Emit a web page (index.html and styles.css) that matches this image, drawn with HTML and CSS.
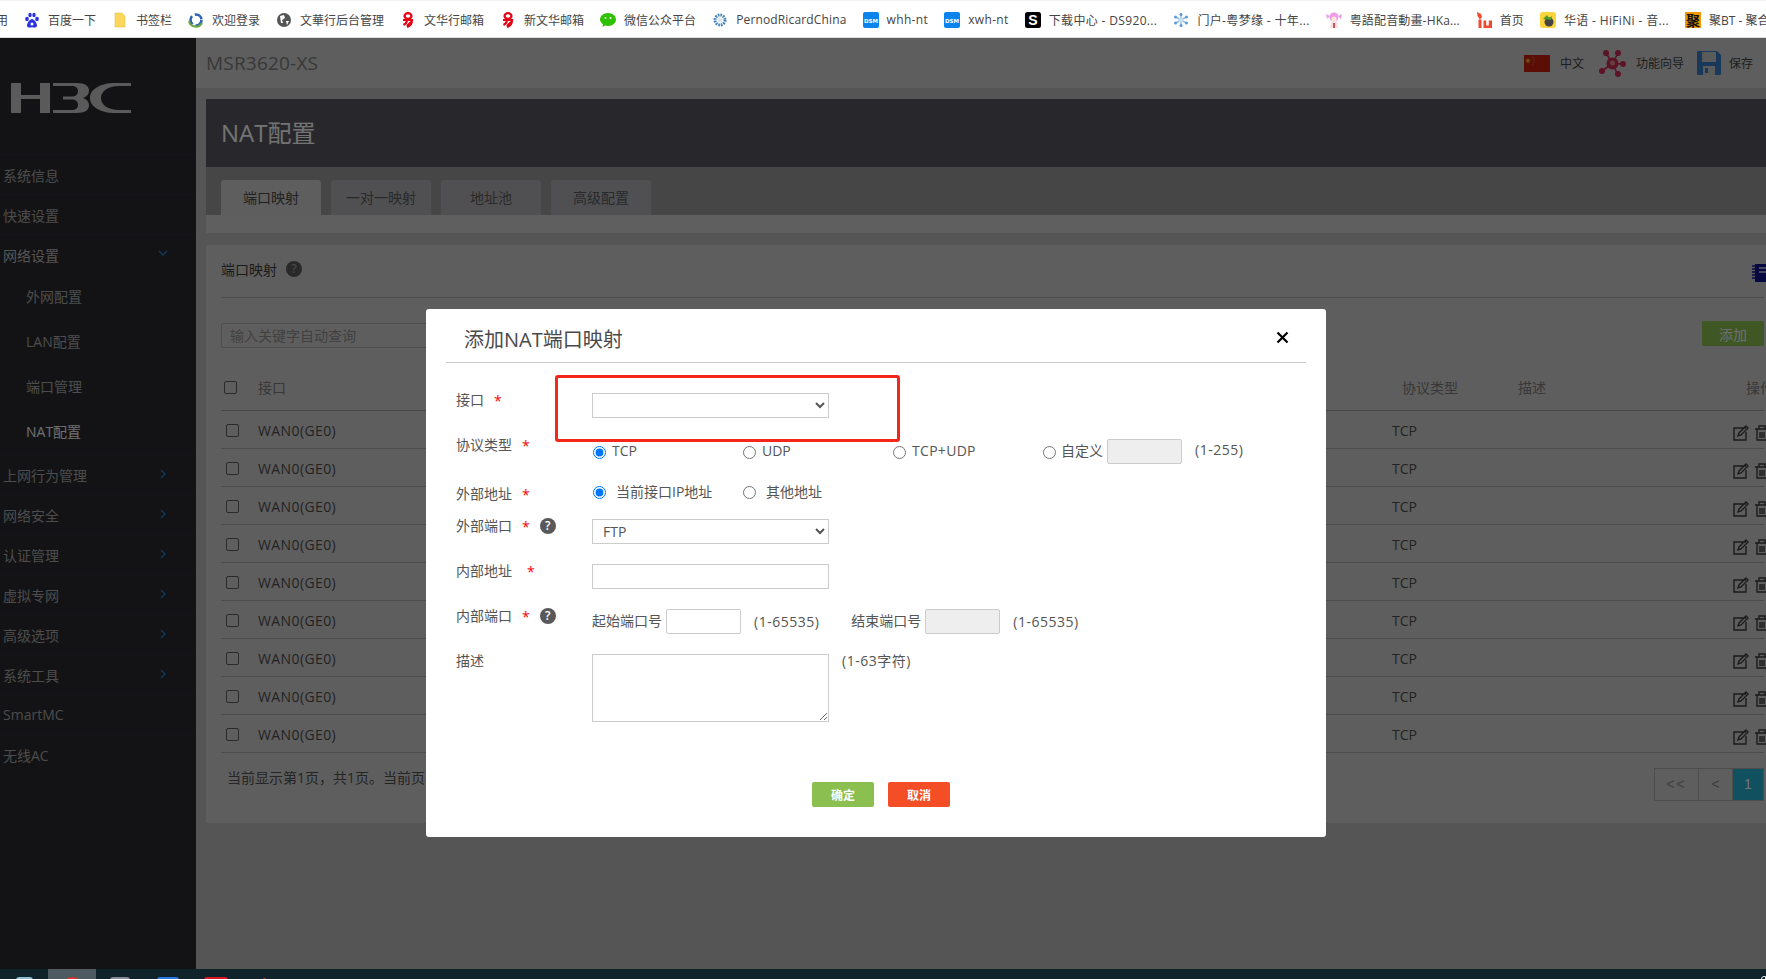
FILE: index.html
```html
<!DOCTYPE html>
<html lang="zh-CN">
<head>
<meta charset="utf-8">
<title>NAT配置</title>
<link rel="stylesheet" href="styles.css">
</head>
<body>
<nav class="bookmarks">
  <a class="bm bm-first"><span>应用</span></a>
  <a class="bm"><svg class="ico" viewBox="0 0 16 16"><g fill="#2932e1"><ellipse cx="3" cy="7" rx="1.8" ry="2.3"/><ellipse cx="6" cy="3" rx="1.7" ry="2.3"/><ellipse cx="10" cy="3" rx="1.7" ry="2.3"/><ellipse cx="13" cy="7" rx="1.8" ry="2.3"/><path d="M8 7c-2 0-5 4-5 6.500 0 2 2 2.500 5 1.800 3 .7 5 .2 5-1.800C13 11 10 7 8 7z"/></g><circle cx="8" cy="12" r="1.500" fill="#fff"/></svg><span>百度一下</span></a>
  <a class="bm"><svg class="ico" viewBox="0 0 16 16"><path d="M3 1h7l3 3v11H3z" fill="#fbd75b" stroke="#e8c24a" stroke-width=".6"/></svg><span>书签栏</span></a>
  <a class="bm"><svg class="ico" viewBox="0 0 16 16"><circle cx="8" cy="8" r="5.500" fill="none" stroke="#2c62b8" stroke-width="2.600" stroke-dasharray="9 3"/><path d="M1 9a7 7 0 0 0 13 2" fill="none" stroke="#6aa83c" stroke-width="2"/></svg><span>欢迎登录</span></a>
  <a class="bm"><svg class="ico" viewBox="0 0 16 16"><circle cx="8" cy="8" r="7" fill="#555"/><path d="M4 4l4-1 1 3-3 2 1 3-2 0zM10 9l3 0-2 4z" fill="#fff"/></svg><span>文華行后台管理</span></a>
  <a class="bm"><svg class="ico" viewBox="0 0 16 16"><g fill="none" stroke="#e60012" stroke-width="2.200"><ellipse cx="8" cy="4" rx="3.500" ry="2.800"/><path d="M3 8h10M12 8c0 4-2 6-5 7M7 9c-.5 2-1.500 3-3.500 4M11 10l-4 4"/></g></svg><span>文华行邮箱</span></a>
  <a class="bm"><svg class="ico" viewBox="0 0 16 16"><g fill="none" stroke="#e60012" stroke-width="2.200"><ellipse cx="8" cy="4" rx="3.500" ry="2.800"/><path d="M3 8h10M12 8c0 4-2 6-5 7M7 9c-.5 2-1.500 3-3.500 4M11 10l-4 4"/></g></svg><span>新文华邮箱</span></a>
  <a class="bm"><svg class="ico" viewBox="0 0 16 16"><path d="M8 1c4.400 0 8 2.900 8 6.500S12.400 14 8 14c-1 0-1.900-.1-2.800-.4L2.500 15l.5-2.800C1.200 11 0 9.400 0 7.500 0 3.900 3.600 1 8 1z" fill="#2dc100"/><circle cx="5.500" cy="6" r="1" fill="#fff"/><circle cx="10.500" cy="6" r="1" fill="#fff"/></svg><span>微信公众平台</span></a>
  <a class="bm"><svg class="ico" viewBox="0 0 16 16"><circle cx="8" cy="8" r="5" fill="none" stroke="#3f7fb5" stroke-width="3" stroke-dasharray="1.600 1"/><circle cx="8" cy="8" r="2.500" fill="#dbe8f2"/></svg><span class="ls-s">PernodRicardChina</span></a>
  <a class="bm"><svg class="ico" viewBox="0 0 16 16"><rect width="16" height="16" rx="2" fill="#0a84ee"/><text x="8" y="10.500" class="ico-dsm">DSM</text></svg><span class="ls-l">whh-nt</span></a>
  <a class="bm"><svg class="ico" viewBox="0 0 16 16"><rect width="16" height="16" rx="2" fill="#0a84ee"/><text x="8" y="10.500" class="ico-dsm">DSM</text></svg><span class="ls-l">xwh-nt</span></a>
  <a class="bm"><svg class="ico" viewBox="0 0 16 16"><rect width="16" height="16" rx="2.500" fill="#000"/><text x="8" y="13" class="ico-s">S</text></svg><span class="ls-l">下载中心 - DS920...</span></a>
  <a class="bm"><svg class="ico" viewBox="0 0 16 16"><g stroke="#8fbde6" stroke-width="1.600"><path d="M8 1v14M2 4.500l12 7M14 4.500l-12 7"/></g><g fill="#5b9bd5"><circle cx="8" cy="2.500" r="1.500"/><circle cx="8" cy="13.500" r="1.500"/><circle cx="2.500" cy="5" r="1.500"/><circle cx="13.500" cy="5" r="1.500"/><circle cx="2.500" cy="11" r="1.500"/><circle cx="13.500" cy="11" r="1.500"/></g><circle cx="8" cy="8" r="2.500" fill="#c7def0"/></svg><span class="ls-l">门户-粤梦缘 - 十年...</span></a>
  <a class="bm"><svg class="ico" viewBox="0 0 16 16"><circle cx="8" cy="5" r="4.500" fill="#ee9be8"/><path d="M0 2l4 2-3 3zM16 2l-4 2 3 3z" fill="#ee9be8"/><circle cx="8" cy="7" r="2.500" fill="#fde8dc"/><path d="M5 10h6l1 6H4z" fill="#f5dfe8"/><path d="M7 11h2v5H7z" fill="#d9534f"/></svg><span class="ls-s">粤語配音動畫-HKa...</span></a>
  <a class="bm"><svg class="ico" viewBox="0 0 16 16"><path d="M1 0l4 2 1 3-2 2.500L1.500 4z" fill="#ef4a2f"/><path d="M2.500 7.500h3V16h-3zM7.500 8.500h2.700v5h2.600v-5H16V16H7.500z" fill="#ef4a2f"/></svg><span>首页</span></a>
  <a class="bm"><svg class="ico" viewBox="0 0 16 16"><rect width="16" height="16" rx="3" fill="#fbd43b"/><circle cx="9" cy="10" r="4.500" fill="#444"/><path d="M3 7l4-4 2 3 3-2-1 4z" fill="#4a9a2c"/></svg><span class="ls-l">华语 - HiFiNi - 音...</span></a>
  <a class="bm"><svg class="ico" viewBox="0 0 16 16"><rect width="16" height="16" fill="#f39800"/><text x="8" y="13.500" class="ico-ju">聚</text></svg><span>聚BT - 聚合</span></a>
</nav>

<div class="app">
  <aside class="sidebar">
    <div class="logo">
      <svg class="logo-mark" viewBox="0 0 120 30" aria-label="H3C">
        <g fill="#c8c8c8">
          <path d="M0 0h10v12h19V0h10v30H29V16H10v14H0z"/>
          <path d="M42 0H66C74 0 78 3 78 7.500 78 11 76 13.500 72 15 76 16.500 78 19 78 22.500 78 27 74 30 66 30H42V27H60C65 27 67 25 67 22 67 18.500 65 16.500 60 16.500H52V13.500H60C65 13.500 67 11.500 67 8 67 5 65 3 60 3H42z"/>
          <path d="M120 0H104C90 0 79 6 79 15 79 24 90 30 104 30H120V27H108C97 27 90 22 90 15 90 8 97 3 108 3H120z"/>
        </g>
      </svg>
    </div>
    <ul class="menu">
      <li class="menu-item"><span>系统信息</span></li>
      <li class="menu-item"><span>快速设置</span></li>
      <li class="menu-item menu-open"><span>网络设置</span><svg class="chev" viewBox="0 0 12 12"><path d="M2 4l4 4 4-4"/></svg></li>
      <li class="sub-list">
        <div class="sub-item">外网配置</div>
        <div class="sub-item">LAN配置</div>
        <div class="sub-item">端口管理</div>
        <div class="sub-item sub-active">NAT配置</div>
      </li>
      <li class="menu-item"><span>上网行为管理</span><svg class="chev" viewBox="0 0 12 12"><path d="M4 2l4 4-4 4"/></svg></li>
      <li class="menu-item"><span>网络安全</span><svg class="chev" viewBox="0 0 12 12"><path d="M4 2l4 4-4 4"/></svg></li>
      <li class="menu-item"><span>认证管理</span><svg class="chev" viewBox="0 0 12 12"><path d="M4 2l4 4-4 4"/></svg></li>
      <li class="menu-item"><span>虚拟专网</span><svg class="chev" viewBox="0 0 12 12"><path d="M4 2l4 4-4 4"/></svg></li>
      <li class="menu-item"><span>高级选项</span><svg class="chev" viewBox="0 0 12 12"><path d="M4 2l4 4-4 4"/></svg></li>
      <li class="menu-item"><span>系统工具</span><svg class="chev" viewBox="0 0 12 12"><path d="M4 2l4 4-4 4"/></svg></li>
      <li class="menu-item"><span>SmartMC</span></li>
      <li class="menu-item"><span>无线AC</span></li>
    </ul>
  </aside>

  <main class="main">
    <header class="topbar">
      <div class="device">MSR3620-XS</div>
      <div class="top-tools">
        <svg class="flag" viewBox="0 0 26 17"><rect width="26" height="17" fill="#c8200f"/><path d="M4 2.500l.8 2.200 2.300 0-1.900 1.400.7 2.200L4 6.900 2.100 8.300l.7-2.200L.9 4.700l2.300 0z" fill="#e8c030"/><circle cx="9" cy="2.500" r=".5" fill="#e8c030"/><circle cx="10" cy="4.500" r=".5" fill="#e8c030"/><circle cx="10" cy="7" r=".5" fill="#e8c030"/><circle cx="9" cy="9" r=".5" fill="#e8c030"/></svg>
        <span class="tool-text tool-lang">中文</span>
        <svg class="hub" viewBox="0 0 27 27"><g stroke="#c92b52" stroke-width="1.600"><path d="M13.500 13.500L7 3M13.500 13.500L19 3M13.500 13.500L25 14M13.500 13.500L3 21M13.500 13.500L19 25"/></g><g fill="#c92b52"><circle cx="7" cy="3" r="3"/><circle cx="19" cy="3" r="3"/><circle cx="24" cy="14" r="3"/><circle cx="3" cy="21" r="3"/><circle cx="19" cy="24" r="3"/><circle cx="13.500" cy="13.500" r="6"/></g><circle cx="13.500" cy="13" r="2.500" fill="#e88a8a"/></svg>
        <span class="tool-text tool-guide">功能向导</span>
        <svg class="floppy" viewBox="0 0 24 24"><path d="M1 0h19l4 4v19a1 1 0 0 1-1 1H1a1 1 0 0 1-1-1V1a1 1 0 0 1 1-1z" fill="#3a7fc8"/><rect x="5" y="1" width="14" height="10" fill="#c9c9c9"/><rect x="6" y="15" width="12" height="9" fill="#c9c9c9"/><rect x="8" y="17" width="3" height="5" fill="#3a7fc8"/></svg>
        <span class="tool-text">保存</span>
      </div>
    </header>

    <div class="wrap">
      <div class="page-title">NAT配置</div>
      <div class="tabs">
        <div class="tab tab-active">端口映射</div>
        <div class="tab">一对一映射</div>
        <div class="tab">地址池</div>
        <div class="tab">高级配置</div>
      </div>
      <div class="tab-strip"></div>

      <section class="card">
        <div class="card-head">
          <span class="card-title">端口映射</span>
          <span class="help help-dark">?</span>
          <svg class="book" viewBox="0 0 20 18"><path d="M3 0h17v18H3z" fill="#161690"/><path d="M0 2h4M0 5h4M0 8h4M0 11h4M0 14h4" stroke="#161690" stroke-width="1.500"/><path d="M7 4h10M7 8h10" stroke="#cfd0e8" stroke-width="1.500"/></svg>
        </div>
        <div class="toolbar">
          <input class="search" type="text" placeholder="输入关键字自动查询">
          <button class="btn-add" type="button">添加</button>
        </div>
        <table class="grid">
          <colgroup><col class="c1"><col class="c2"><col class="c3"><col class="c4"><col class="c5"></colgroup>
          <thead>
            <tr><th class="th-check"><input type="checkbox"></th><th>接口</th><th class="th-proto">协议类型</th><th>描述</th><th class="th-op">操作</th></tr>
          </thead>
          <tbody>
            <tr><td class="td-check"><input type="checkbox"></td><td class="td-if">WAN0(GE0)</td><td>TCP</td><td></td><td class="td-op"><svg class="op" viewBox="0 0 36 16"><path d="M13 3H1v12h12V7M5 11l1-3 7-7 2 2-7 7z"/><path d="M22 4h14M26 4V1h6v3M24 4v11h10V4M27 7v6M29 7v6M31 7v6"/></svg></td></tr>
            <tr><td class="td-check"><input type="checkbox"></td><td class="td-if">WAN0(GE0)</td><td>TCP</td><td></td><td class="td-op"><svg class="op" viewBox="0 0 36 16"><path d="M13 3H1v12h12V7M5 11l1-3 7-7 2 2-7 7z"/><path d="M22 4h14M26 4V1h6v3M24 4v11h10V4M27 7v6M29 7v6M31 7v6"/></svg></td></tr>
            <tr><td class="td-check"><input type="checkbox"></td><td class="td-if">WAN0(GE0)</td><td>TCP</td><td></td><td class="td-op"><svg class="op" viewBox="0 0 36 16"><path d="M13 3H1v12h12V7M5 11l1-3 7-7 2 2-7 7z"/><path d="M22 4h14M26 4V1h6v3M24 4v11h10V4M27 7v6M29 7v6M31 7v6"/></svg></td></tr>
            <tr><td class="td-check"><input type="checkbox"></td><td class="td-if">WAN0(GE0)</td><td>TCP</td><td></td><td class="td-op"><svg class="op" viewBox="0 0 36 16"><path d="M13 3H1v12h12V7M5 11l1-3 7-7 2 2-7 7z"/><path d="M22 4h14M26 4V1h6v3M24 4v11h10V4M27 7v6M29 7v6M31 7v6"/></svg></td></tr>
            <tr><td class="td-check"><input type="checkbox"></td><td class="td-if">WAN0(GE0)</td><td>TCP</td><td></td><td class="td-op"><svg class="op" viewBox="0 0 36 16"><path d="M13 3H1v12h12V7M5 11l1-3 7-7 2 2-7 7z"/><path d="M22 4h14M26 4V1h6v3M24 4v11h10V4M27 7v6M29 7v6M31 7v6"/></svg></td></tr>
            <tr><td class="td-check"><input type="checkbox"></td><td class="td-if">WAN0(GE0)</td><td>TCP</td><td></td><td class="td-op"><svg class="op" viewBox="0 0 36 16"><path d="M13 3H1v12h12V7M5 11l1-3 7-7 2 2-7 7z"/><path d="M22 4h14M26 4V1h6v3M24 4v11h10V4M27 7v6M29 7v6M31 7v6"/></svg></td></tr>
            <tr><td class="td-check"><input type="checkbox"></td><td class="td-if">WAN0(GE0)</td><td>TCP</td><td></td><td class="td-op"><svg class="op" viewBox="0 0 36 16"><path d="M13 3H1v12h12V7M5 11l1-3 7-7 2 2-7 7z"/><path d="M22 4h14M26 4V1h6v3M24 4v11h10V4M27 7v6M29 7v6M31 7v6"/></svg></td></tr>
            <tr><td class="td-check"><input type="checkbox"></td><td class="td-if">WAN0(GE0)</td><td>TCP</td><td></td><td class="td-op"><svg class="op" viewBox="0 0 36 16"><path d="M13 3H1v12h12V7M5 11l1-3 7-7 2 2-7 7z"/><path d="M22 4h14M26 4V1h6v3M24 4v11h10V4M27 7v6M29 7v6M31 7v6"/></svg></td></tr>
            <tr><td class="td-check"><input type="checkbox"></td><td class="td-if">WAN0(GE0)</td><td>TCP</td><td></td><td class="td-op"><svg class="op" viewBox="0 0 36 16"><path d="M13 3H1v12h12V7M5 11l1-3 7-7 2 2-7 7z"/><path d="M22 4h14M26 4V1h6v3M24 4v11h10V4M27 7v6M29 7v6M31 7v6"/></svg></td></tr>
          </tbody>
        </table>
        <div class="card-foot">
          <div class="foot-text">当前显示第1页，共1页。当前页共9条</div>
          <div class="pager"><span class="pg pg-first">&lt;&lt;</span><span class="pg pg-prev">&lt;</span><span class="pg pg-cur">1</span></div>
        </div>
      </section>
    </div>
  </main>

  <div class="overlay"></div>

  <div class="modal">
    <div class="modal-head">
      <h2 class="modal-title">添加NAT端口映射</h2>
      <svg class="close" viewBox="0 0 13 13"><path d="M1.500 1.500l10 10M11.500 1.500l-10 10"/></svg>
    </div>
    <form class="form">
      <div class="row row-a">
        <div class="lab"><span>接口</span><i class="star">*</i></div>
        <select class="ctl"><option></option></select>
      </div>
      <div class="row row-b">
        <div class="lab lab-up"><span>协议类型</span><i class="star">*</i></div>
        <div class="radios">
          <label class="radio"><input type="radio" name="p" checked>TCP</label>
          <label class="radio"><input type="radio" name="p">UDP</label>
          <label class="radio radio-both"><input type="radio" name="p">TCP+UDP</label>
          <label class="radio radio-last"><input type="radio" name="p">自定义<input class="short" type="text" disabled><span class="hint">(1-255)</span></label>
        </div>
      </div>
      <div class="row row-c">
        <div class="lab lab-down"><span>外部地址</span><i class="star">*</i></div>
        <div class="radios radios-wide">
          <label class="radio"><input type="radio" name="a" checked>当前接口IP地址</label>
          <label class="radio"><input type="radio" name="a">其他地址</label>
        </div>
      </div>
      <div class="row">
        <div class="lab"><span>外部端口</span><i class="star">*</i><span class="help">?</span></div>
        <select class="ctl"><option>FTP</option></select>
      </div>
      <div class="row">
        <div class="lab"><span>内部地址</span><i class="star star-far">*</i></div>
        <input class="ctl" type="text">
      </div>
      <div class="row">
        <div class="lab"><span>内部端口</span><i class="star">*</i><span class="help">?</span></div>
        <div class="ports">
          <span class="port-lab">起始端口号</span><input class="short" type="text"><span class="hint">(1-65535)</span>
          <span class="port-lab port-end">结束端口号</span><input class="short" type="text" disabled><span class="hint">(1-65535)</span>
        </div>
      </div>
      <div class="row">
        <div class="lab"><span>描述</span></div>
        <textarea class="area"></textarea>
        <span class="hint hint-area">(1-63字符)</span>
      </div>
      <div class="actions">
        <button class="btn btn-ok" type="button">确定</button>
        <button class="btn btn-cancel" type="button">取消</button>
      </div>
    </form>
    <div class="callout"></div>
  </div>
</div>

<footer class="taskbar">
  <span class="tb-app"><i class="tb-i tb-win"></i></span>
  <span class="tb-app tb-active"><i class="tb-i tb-red"></i></span>
  <span class="tb-app"><i class="tb-i tb-gray"></i></span>
  <span class="tb-app"><i class="tb-i tb-blue"></i></span>
  <span class="tb-app"><i class="tb-i tb-crimson"></i></span>
  <span class="tb-app"><i class="tb-i tb-dot"></i></span>
  <i class="tb-tray"></i>
</footer>
</body>
</html>
```

FILE: styles.css
```css
* { box-sizing: border-box; }
html, body { margin: 0; height: 100%; }
body {
  width: 1766px;
  height: 979px;
  overflow: hidden;
  display: flex;
  flex-direction: column;
  font-family: "Open Sans", "Noto Sans CJK SC", sans-serif;
  font-size: 14px;
  color: #525252;
  background: #bdbdbd;
}

/* bookmarks bar */
.bookmarks {
  flex: none;
  height: 38px;
  display: flex;
  align-items: center;
  gap: 16px;
  padding-top: 1px;
  background: #fff;
  border-top: 1px solid #f1f1f1;
  border-bottom: 1px solid #dcdcdc;
  overflow: hidden;
  font-size: 12px;
  color: #444;
}
.bm { display: flex; align-items: center; gap: 8px; flex: none; white-space: nowrap; }
.bm-first { margin-left: -16px; }
.ls-s { letter-spacing: .15px; }
.ls-l { letter-spacing: .35px; }
.ico { width: 16px; height: 16px; flex: none; }
.ico-dsm { font: bold 5.500px "DejaVu Sans", sans-serif; fill: #fff; text-anchor: middle; }
.ico-s { font: bold 14px "Liberation Sans", sans-serif; fill: #fff; text-anchor: middle; }
.ico-ju { font: bold 14px "Noto Sans CJK SC", sans-serif; fill: #111; text-anchor: middle; }

/* app */
.app { position: relative; flex: 1; display: flex; min-height: 0; overflow: hidden; }
.sidebar { flex: none; width: 196px; background: #2a2c31; color: #a8a8a8; }
.logo { height: 116px; padding: 45px 0 0 11px; }
.logo-mark { display: block; width: 120px; height: 30px; }
.menu { list-style: none; margin: 0; padding: 0; }
.menu-item {
  height: 40px;
  display: flex;
  align-items: center;
  justify-content: space-between;
  padding: 0 27px 0 3px;
  border-top: 1px solid #2e3035;
}
.menu-open { color: #bcbcbc; }
.chev { width: 12px; height: 12px; margin-top: -2px; fill: none; stroke: #2882cd; stroke-width: 1.300; }
.menu-open .chev { margin-top: -4px; }
.sub-item { height: 45px; line-height: 45px; padding-left: 26px; }
.sub-active { color: #f4f4f4; }

.main { flex: 1; min-width: 0; overflow: hidden; }
.topbar {
  height: 50px;
  display: flex;
  align-items: center;
  justify-content: space-between;
  padding: 0 13px 0 10px;
  background: #d1d1d1;
}
.device { font-size: 19px; letter-spacing: .2px; color: #7c7c7c; }
.top-tools { display: flex; align-items: center; font-size: 12px; }
.tool-text { color: #444; }
.flag { width: 26px; height: 17px; margin-right: 10px; }
.tool-lang { margin-right: 15px; }
.hub { width: 27px; height: 27px; margin-right: 10px; }
.tool-guide { margin-right: 13px; }
.floppy { width: 24px; height: 24px; margin-right: 8px; }

.wrap { width: 1573px; margin-left: 10px; padding-top: 11px; }
.page-title {
  height: 68px;
  line-height: 68px;
  padding-left: 15px;
  font-size: 24px;
  color: #fff;
  background: #595962;
}
.tabs { height: 48px; padding: 13px 15px 0; display: flex; gap: 10px; background: #9b9b9d; }
.tab {
  width: 100px;
  height: 35px;
  line-height: 35px;
  text-align: center;
  border-radius: 3px 3px 0 0;
  background: #b2b2b8;
  color: #5c5c5c;
}
.tab-active { background: #d1d1d1; color: #4a4a4a; }
.tab-strip { height: 18px; background: #d3d3d3; }
.card { margin-top: 12px; padding: 0 15px; height: 578px; background: #d1d1d1; }
.card-head {
  height: 53px;
  padding-bottom: 5px;
  display: flex;
  align-items: center;
  gap: 9px;
  border-bottom: 1px solid #aaa;
}
.card-title { color: #3c3c3c; }
.help {
  width: 16px;
  height: 16px;
  flex: none;
  border-radius: 50%;
  background: #595959;
  color: #fff;
  font-size: 12px;
  line-height: 16px;
  text-align: center;
  font-weight: 600;
}
.help-dark { background: #5c5c5c; color: #999; }
.book { width: 20px; height: 18px; margin-left: auto; margin-right: -8px; margin-top: 8px; }
.toolbar { display: flex; justify-content: space-between; padding-top: 25px; height: 66px; }
.search {
  width: 400px;
  height: 25px;
  padding: 0 8px;
  border: 1px solid #aaa;
  border-radius: 2px;
  background: #d1d1d1;
  font: inherit;
}
.search::placeholder { color: #909090; }
.btn-add {
  width: 62px;
  height: 25px;
  margin-top: -2px;
  border: 0;
  border-radius: 2px;
  background: #8bc051;
  color: #f4f4f4;
  font: inherit;
  padding: 0;
}
.grid { table-layout: fixed; width: 1543px; border-collapse: collapse; }
.c1 { width: 37px; } .c2 { width: 1134px; } .c3 { width: 126px; } .c4 { width: 215px; } .c5 { width: 31px; }
.grid th {
  height: 46px;
  padding: 0;
  text-align: left;
  font-weight: 400;
  color: #7c7c7c;
  border-bottom: 1px solid #a0a0a0;
  white-space: nowrap;
}
.grid td { height: 38px; padding: 3px 0 0; border-bottom: 1px solid #a8a8a8; color: #4e4e4e; }
.grid input {
  appearance: none;
  display: block;
  width: 13px;
  height: 13px;
  margin: 0;
  border: 1px solid #5d5d5d;
  border-radius: 2px;
  background: transparent;
}
.th-check { padding-left: 3px !important; padding-top: 1px !important; }
.td-check { padding-left: 5px !important; }
.td-if { letter-spacing: .4px; }
.th-proto { padding-left: 10px !important; }
.th-op { padding-left: 13px !important; }
.td-op { white-space: nowrap; }
.op { display: block; width: 36px; height: 16px; margin-top: 5px; fill: none; stroke: #3c3c3c; stroke-width: 1.400; overflow: visible; }
.card-foot { display: flex; justify-content: space-between; padding-top: 15px; }
.foot-text { padding-left: 6px; line-height: 20px; color: #525252; }
.pager { display: flex; height: 33px; border: 1px solid #a8a8a8; }
.pg { height: 100%; line-height: 30px; text-align: center; color: #8a8a8a; font-size: 14px; font-family: "Liberation Sans", sans-serif; border-right: 1px solid #b0b0b0; }
.pg-first { width: 44px; letter-spacing: 2px; }
.pg-prev { width: 34px; }
.pg-cur { width: 30px; background: #26b2d3; color: #fff; border-right: 0; }

/* overlay and modal */
.overlay { position: absolute; inset: 0; background: rgba(0, 0, 0, .55); }
.modal {
  position: absolute;
  left: 426px;
  top: 271px;
  width: 900px;
  height: 528px;
  padding: 0 20px;
  background: #fff;
  border-radius: 3px;
  color: #555;
}
.modal-head {
  height: 54px;
  display: flex;
  align-items: center;
  justify-content: space-between;
  padding: 5px 17px 0 18px;
  border-bottom: 1px solid #ccc;
}
.modal-title { margin: 0; font-size: 20px; font-weight: 400; color: #4a4a4a; }
.close { width: 13px; height: 13px; margin-bottom: 2px; fill: none; stroke: #000; stroke-width: 2.200; }
.form { padding: 30px 0 0 10px; }
.row { display: flex; align-items: flex-start; min-height: 25px; margin-bottom: 20px; }
.row-a { margin-bottom: 21px; }
.row-b { margin-bottom: 15px; }
.row-c { margin-bottom: 13px; }
.lab { flex: none; width: 136px; display: flex; align-items: flex-start; line-height: 20px; margin-top: -3px; }
.lab-up { margin-top: -4px; }
.lab-down { margin-top: 5px; }
.star { margin-left: 10px; color: #f00; font-style: normal; font-size: 14px; line-height: 22px; }
.star-far { margin-left: 15px; }
.lab .help { margin-left: 10px; margin-top: 2px; }
.ctl {
  width: 237px;
  height: 25px;
  padding: 0 6px;
  border: 1px solid #ccc;
  border-radius: 0;
  background: #fff;
  font: inherit;
  color: #555;
}
.radios { display: grid; grid-template-columns: 150px 150px 150px auto; height: 25px; align-items: start; }
.radio { display: flex; align-items: center; height: 23px; white-space: nowrap; }
.radio input[type="radio"] { width: 13px; height: 13px; margin: 3px 6px 0 1px; flex: none; }
.radio-both { letter-spacing: .3px; }
.radio-last { padding-bottom: 2px; }
.radio-last input[type="radio"] { margin: 5px 5px 0 1px; }
.radio-last .short { align-self: flex-start; }
.radio-last .hint { line-height: 23px; }
.radios-wide .radio input[type="radio"] { margin-right: 10px; }
.short {
  width: 75px;
  height: 25px;
  padding: 0 4px;
  margin-left: 4px;
  border: 1px solid #ccc;
  border-radius: 2px;
  background: #fff;
  font: inherit;
}
.short:disabled { background: #eee; }
.hint { margin-left: 13px; line-height: 25px; white-space: nowrap; letter-spacing: .5px; }
.ports { display: flex; align-items: center; height: 25px; white-space: nowrap; }
.port-lab { margin-top: -3px; }
.port-end { margin-left: 32px; }
.area {
  width: 237px;
  height: 68px;
  border: 1px solid #ccc;
  background: #fff;
  font: inherit;
  display: block;
}
.hint-area { line-height: 14px; }
.actions { display: flex; gap: 14px; margin-top: 60px; padding-left: 356px; }
.btn {
  width: 62px;
  height: 25px;
  padding: 0;
  border: 0;
  border-radius: 2px;
  color: #fff;
  font: 600 12px "Open Sans", "Noto Sans CJK SC", sans-serif;
}
.btn-ok { background: #8bc051; }
.btn-cancel { background: #f44e26; }
.callout {
  position: absolute;
  left: 129px;
  top: 66px;
  width: 345px;
  height: 67px;
  border: 3px solid #f5261c;
  border-radius: 3px;
}

/* taskbar clipped at the bottom of the capture */
.taskbar {
  flex: none;
  height: 10px;
  display: flex;
  background: #10222a;
  overflow: hidden;
  position: relative;
}
.tb-app { width: 48px; height: 10px; flex: none; padding-top: 8px; display: flex; justify-content: center; }
.tb-active { background: #4d5a60; }
.tb-i { display: block; width: 17px; height: 12px; border-radius: 3px 3px 0 0; }
.tb-win { background: #8fbcd0; }
.tb-red { background: #d9352a; border-radius: 50%; }
.tb-gray { background: #8a8a98; width: 20px; }
.tb-blue { background: #2b78e4; width: 22px; }
.tb-crimson { background: #e01424; width: 24px; }
.tb-dot { background: #c8352a; width: 3px; margin-top: 1px; }
.tb-tray { position: absolute; right: 0; top: 7px; width: 5px; height: 6px; border: 1px solid #eee; border-radius: 3px 0 0 0; }
```
